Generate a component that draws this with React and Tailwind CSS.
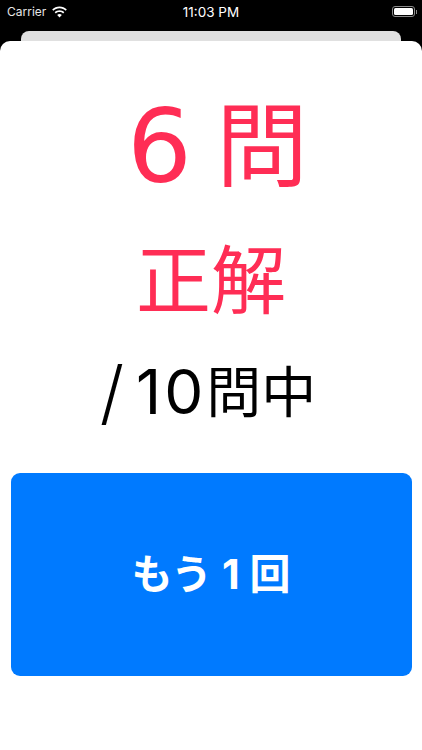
const fontStack = "font-['Inter','Noto_Sans_CJK_JP',sans-serif]"

function Wifi() {
  return (
    <svg width="17" height="12" viewBox="0 0 17 12" fill="white">
      <path d="M8.5 2.3c2.4 0 4.6.9 6.2 2.5l1.1-1.2C13.9 1.7 11.3.6 8.5.6S3.100 1.700 1.200 3.600l1.100 1.200C3.900 3.200 6.100 2.300 8.500 2.300z" />
      <path d="M8.500 6c1.400 0 2.600.5 3.600 1.400l1.200-1.200C12 5 10.300 4.300 8.500 4.300S5 5 3.700 6.200l1.200 1.200C5.900 6.500 7.100 6 8.500 6z" />
      <path d="M8.500 11.400l2.300-2.400c-.6-.6-1.400-.9-2.300-.9s-1.700.3-2.300.9z" />
    </svg>
  )
}

function Battery() {
  return (
    <div className="flex items-center gap-[1px]">
      <div className="w-[23px] h-[11px] rounded-[3px] border border-[#8a8a8a] p-[1px]">
        <div className="w-full h-full bg-white rounded-[1.5px]" />
      </div>
      <div className="w-[1px] h-[4px] bg-[#8a8a8a]" />
    </div>
  )
}

export default function App() {
  return (
    <div className={`w-[422px] h-[750px] bg-black overflow-hidden flex flex-col ${fontStack}`}>
      <div className="h-[21px] pt-[2px] flex items-center justify-between text-white text-[12px] relative px-[7px] shrink-0">
        <div className="flex items-center gap-[5px]">
          <span className="text-[#e6e6e6]">Carrier</span>
          <Wifi />
        </div>
        <span className="absolute left-0 right-0 pt-[2px] text-center text-[13.5px]">11:03 PM</span>
        <div className="-mr-[2px]"><Battery /></div>
      </div>
      <div className="h-[10px] shrink-0" />
      <div className="mx-[21px] h-[10px] bg-[#e0e0e0] rounded-t-[8px] shrink-0" />
      <div className="flex-1 bg-white rounded-t-[10px] flex flex-col items-center">
        <div className="mt-[55px] pl-[13px] h-[100px] flex items-center text-[#ff2d55] text-[92px] leading-none whitespace-nowrap">
          <span className="font-['DejaVu_Sans'] font-medium text-[102px] translate-y-[1px] mr-[24px]">6</span>
          <span>問</span>
        </div>
        <div className="mt-[44px] h-[80px] flex items-center text-[#ff2d55] text-[75px] leading-none whitespace-nowrap">正解</div>
        <div className="mt-[40px] -ml-[6px] h-[64px] flex items-center text-black text-[55px] leading-none whitespace-nowrap">
          <span className="text-[70px] font-light mr-[12px]">/</span>
          <span className="text-[62px] tracking-[3px]">10</span>
          <span>問中</span>
        </div>
        <button className="mt-[49px] w-[401px] h-[203px] bg-[#007aff] rounded-[9px] text-white text-[41px] font-bold flex items-center justify-center whitespace-nowrap">もう 1 回</button>
      </div>
    </div>
  )
}
